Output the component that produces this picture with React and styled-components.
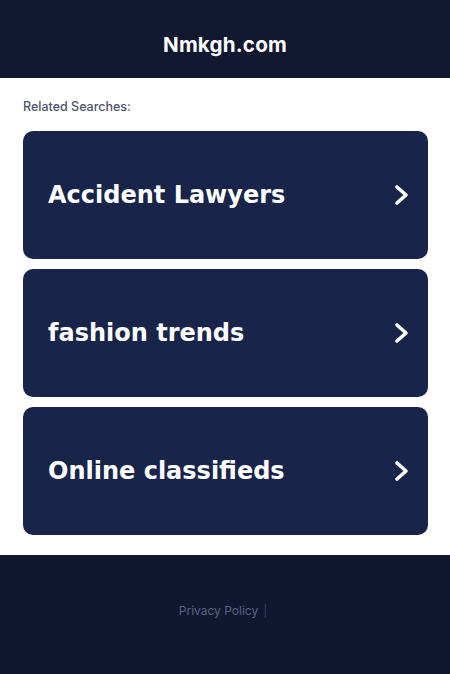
import React from "react";
import styled, { createGlobalStyle } from "styled-components";

const Global = createGlobalStyle`
  html, body { margin: 0; padding: 0; background: #fff; }
  * { box-sizing: border-box; }
`;

const Header = styled.header`
  height: 78px;
  background: #111830;
  display: flex;
  align-items: center;
  justify-content: center;
`;

const Title = styled.h1`
  margin: 0;
  padding-top: 10px;
  color: #fff;
  font-family: "Inter", "Open Sans", sans-serif;
  font-weight: 700;
  font-size: 20.6px;
  letter-spacing: 0.2px;
`;

const Main = styled.main`
  background: #fff;
  padding: 21px 22px 20px 23px;
`;

const Label = styled.div`
  font-family: "Inter", "Open Sans", sans-serif;
  font-size: 12.5px;
  line-height: 15px;
  color: #4b5470;
  font-weight: 500;
  margin-bottom: 17px;
`;

const List = styled.div`
  display: flex;
  flex-direction: column;
  gap: 10px;
`;

const Card = styled.a`
  display: flex;
  align-items: center;
  justify-content: space-between;
  height: 128px;
  padding: 0 16px 0 25px;
  background: #18244a;
  border-radius: 10px;
  text-decoration: none;
  color: #fff;
`;

const CardText = styled.span`
  font-family: "DejaVu Sans", sans-serif;
  font-weight: 700;
  font-size: 24px;
`;

const Footer = styled.footer`
  height: 119px;
  background: #101730;
  display: flex;
  align-items: center;
  justify-content: center;
  padding-bottom: 8px;
`;

const FooterText = styled.span`
  font-family: "Inter", "Open Sans", sans-serif;
  font-size: 12px;
  color: #5a6380;
  margin-left: -4px;
`;

const Sep = styled.span`
  color: #3a4260;
  margin-left: 5px;
`;

const Chevron = () => (
  <svg width="20" height="24" viewBox="0 0 20 24">
    <polyline
      points="5,4 14,12 5,20"
      fill="none"
      stroke="#fff"
      strokeWidth="3.6"
      strokeLinecap="round"
      strokeLinejoin="round"
    />
  </svg>
);

const items = ["Accident Lawyers", "fashion trends", "Online classifieds"];

export default function App() {
  return (
    <>
      <Global />
      <Header>
        <Title>Nmkgh.com</Title>
      </Header>
      <Main>
        <Label>Related Searches:</Label>
        <List>
          {items.map((t) => (
            <Card key={t} href="#">
              <CardText>{t}</CardText>
              <Chevron />
            </Card>
          ))}
        </List>
      </Main>
      <Footer>
        <FooterText>
          Privacy Policy<Sep>|</Sep>
        </FooterText>
      </Footer>
    </>
  );
}
